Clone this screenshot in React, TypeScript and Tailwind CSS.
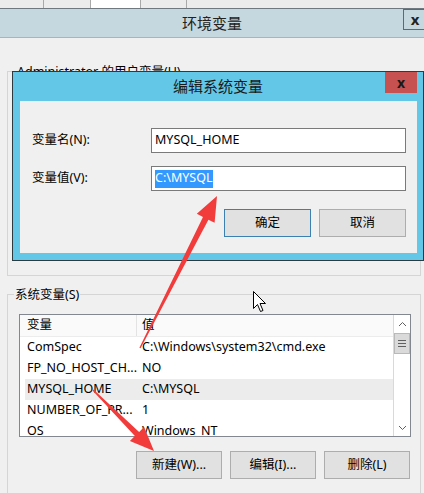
import React from "react";

const ROWS = [
  { name: "ComSpec", value: "C:\\Windows\\system32\\cmd.exe" },
  { name: "FP_NO_HOST_CH...", value: "NO" },
  { name: "MYSQL_HOME", value: "C:\\MYSQL", selected: true },
  { name: "NUMBER_OF_PR...", value: "1" },
  { name: "OS", value: "Windows_NT" },
];

function WinButton({ label, primary = false, small = false }: { label: string; primary?: boolean; small?: boolean }) {
  return (
    <div
      className={`flex h-[28px] items-center justify-center border bg-[#e1e1e1] ${
        primary ? "border-[#3c7fb1]" : "border-[#adadad]"
      } ${small ? "w-[86px]" : "w-[87px]"}`}
    >
      {label}
    </div>
  );
}

function Overlay() {
  return (
    <svg className="pointer-events-none absolute inset-0" width="424" height="493" viewBox="0 0 424 493">
      {/* arrow to the value field */}
      <polygon
        points="139.4,347.7 203,216.9 196.8,213.8 217,196 214.6,222.8 208.4,219.7 140.6,348.3"
        fill="#f23b3b"
      />
      {/* arrow to the new button */}
      <polygon
        points="92.5,390.5 134.9,436.1 129.9,441.1 154,451 144.1,426.9 139.1,431.9 93.5,389.5"
        fill="#f23b3b"
      />
      {/* mouse cursor */}
      <polygon
        points="253.5,291.5 253.5,308.5 257.5,304.5 260.5,311.5 263,310.5 260,303.5 265.5,303.5"
        fill="#fff"
        stroke="#000"
        strokeWidth="1"
      />
    </svg>
  );
}

export default function App() {
  return (
    <div className="relative h-[493px] w-[424px] overflow-hidden bg-[#f0f0f0] text-[12.5px] leading-none text-black font-['Noto_Sans','Noto_Sans_CJK_SC',sans-serif]">
      {/* tabs of the window behind */}
      <div className="flex h-[9px] border-b border-[#6f7a80] bg-[#ececec]">
        <div className="w-[44px] border-r border-[#a9a9a9]" />
        <div className="w-[47px] border-r border-[#a9a9a9]" />
        <div className="w-[50px] border-r border-[#a9a9a9] bg-white" />
        <div className="w-[46px] border-r border-[#a9a9a9]" />
        <div className="flex-1" />
      </div>

      {/* 环境变量 title bar */}
      <div className="relative flex h-[29px] items-center justify-center border-b border-[#a8b6bc] bg-[#c6d8df] text-[15px] text-[#222]">
        环境变量
        <div className="absolute right-0 top-0 flex h-[21px] w-[21px] items-center justify-center border border-r-0 border-[#5d6a70] pl-[2px] text-[15px] font-bold">
          x
        </div>
      </div>

      {/* user variables group, mostly hidden */}
      <fieldset className="ml-[7px] mr-[3px] mt-[25px] h-[213px] border border-[#d5d5d5] px-[8px]">
        <legend className="px-[1px] leading-[17px]">Administrator 的用户变量(U)</legend>
      </fieldset>

      {/* system variables group */}
      <fieldset className="ml-[7px] mr-[3px] mt-[10px] h-[240px] border border-[#d5d5d5] pl-[11px]">
        <legend className="-ml-[5px] px-[1px] leading-[17px]">系统变量(S)</legend>

        <div className="mt-[11px] flex h-[123px] w-[392px] border border-[#828790] bg-white">
          <div className="flex-1 overflow-hidden">
            <div className="flex h-[22px] items-center border-b border-[#ececec] bg-[#fafafa]">
              <div className="flex h-full w-[117px] items-center border-r border-[#e3e3e3] pl-[7px]">变量</div>
              <div className="pl-[5px]">值</div>
            </div>
            {ROWS.map((r) => (
              <div
                key={r.name}
                className={`ml-[5px] flex h-[21px] items-center ${r.selected ? "bg-[#ececec]" : ""}`}
              >
                <div className="w-[117px] whitespace-nowrap pl-[2px]">{r.name}</div>
                <div className="whitespace-nowrap">{r.value}</div>
              </div>
            ))}
          </div>
          {/* scrollbar */}
          <div className="flex w-[17px] flex-col border-l border-[#d9d9d9] bg-white">
            <div className="flex h-[18px] items-center justify-center">
              <svg width="9" height="6" viewBox="0 0 9 6">
                <path d="M1 5 L4.5 1.5 L8 5" fill="none" stroke="#606060" strokeWidth="1" />
              </svg>
            </div>
            <div className="flex h-[21px] items-center justify-center border border-[#b9b9b9] bg-[#dadada]">
              <svg width="8" height="7" viewBox="0 0 8 7">
                <path d="M0 0.5 H8 M0 3.5 H8 M0 6.5 H8" stroke="#606060" strokeWidth="1" />
              </svg>
            </div>
            <div className="flex-1" />
            <div className="flex h-[17px] items-center justify-center">
              <svg width="9" height="6" viewBox="0 0 9 6">
                <path d="M1 1 L4.5 4.5 L8 1" fill="none" stroke="#606060" strokeWidth="1" />
              </svg>
            </div>
          </div>
        </div>

        <div className="mt-[14px] flex w-[391px] justify-end gap-[8px]">
          <WinButton label="新建(W)..." small />
          <WinButton label="编辑(I)..." small />
          <WinButton label="删除(L)" small />
        </div>
      </fieldset>

      {/* 编辑系统变量 dialog on top */}
      <div className="absolute left-[12px] top-[71px] h-[190px] w-[412px] border border-[#2d3a40] bg-[#63c8e8]">
        <div className="relative flex h-[29px] items-center justify-center text-[15px] text-[#1a1a1a]">
          编辑系统变量
          <div className="absolute right-[6px] top-0 flex h-[21px] w-[32px] items-center justify-center bg-[#c75050] text-[14px] font-bold">
            x
          </div>
        </div>
        <div className="ml-[7px] mr-[6px] h-[152px] bg-[#f0f0f0] pl-[12px] pt-[27px]">
          <div className="flex h-[25px] items-center">
            <div className="w-[119px]">变量名(N):</div>
            <div className="flex h-[25px] w-[255px] items-center border border-[#7a7a7a] bg-white px-[3px]">
              MYSQL_HOME
            </div>
          </div>
          <div className="mt-[13px] flex h-[25px] items-center">
            <div className="w-[119px]">变量值(V):</div>
            <div className="flex h-[25px] w-[255px] items-center border border-[#7a7a7a] bg-white px-[3px]">
              <span className="flex h-[18px] items-center bg-[#3399ff] text-white">C:\MYSQL</span>
            </div>
          </div>
          <div className="ml-[192px] mt-[18px] flex gap-[8px]">
            <WinButton label="确定" primary />
            <WinButton label="取消" />
          </div>
        </div>
      </div>

      <Overlay />
    </div>
  );
}
